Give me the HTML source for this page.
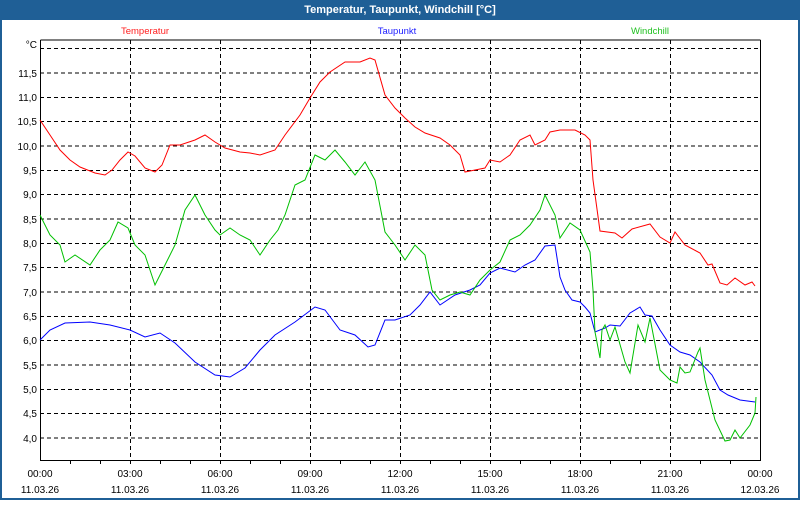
<!DOCTYPE html>
<html><head><meta charset="utf-8"><style>
body{margin:0;width:800px;height:500px;overflow:hidden;background:#fff;font-family:"Liberation Sans",sans-serif}
</style></head><body>
<svg width="800" height="500" xmlns="http://www.w3.org/2000/svg" font-family="Liberation Sans, sans-serif" font-size="10">
<rect x="0" y="0" width="800" height="500" fill="#1f5f96"/>
<rect x="2" y="20" width="796" height="478" fill="#fff"/>
<text x="400" y="13" fill="#fff" font-weight="bold" font-size="11" text-anchor="middle">Temperatur, Taupunkt, Windchill [°C]</text>
<text x="145" y="34" fill="#ff2020" text-anchor="middle" font-size="9.5">Temperatur</text>
<text x="397" y="34" fill="#2020ff" text-anchor="middle" font-size="9.5">Taupunkt</text>
<text x="650" y="34" fill="#20c020" text-anchor="middle" font-size="9.5">Windchill</text>
<g stroke="#000" stroke-dasharray="4,3" stroke-width="1">
<path d="M40 48.5H760M40 73H760M40 97.5H760M40 121.5H760M40 146H760M40 170.5H760M40 194.5H760M40 219H760M40 243.5H760M40 267.5H760M40 292H760M40 316.5H760M40 340.5H760M40 365H760M40 389.5H760M40 413.5H760M40 438H760"/>
<path d="M130.5 40V460M220.5 40V460M310.5 40V460M400.5 40V460M490.5 40V460M580.5 40V460M670.5 40V460"/>
</g>
<path d="M40.5 40V460.5H760.5V40" fill="none" stroke="#000"/>
<path d="M40.5 40H760.5" stroke="#000"/>
<g stroke="#000"><path d="M70.5 460v4M100.5 460v4M130.5 460v4M160.5 460v4M190.5 460v4M220.5 460v4M250.5 460v4M280.5 460v4M310.5 460v4M340.5 460v4M370.5 460v4M400.5 460v4M430.5 460v4M460.5 460v4M490.5 460v4M520.5 460v4M550.5 460v4M580.5 460v4M610.5 460v4M640.5 460v4M670.5 460v4M700.5 460v4M730.5 460v4"/></g>
<g text-anchor="end" fill="#000">
<text x="37" y="48">°C</text>
<text x="37" y="77">11,5</text><text x="37" y="101">11,0</text><text x="37" y="125">10,5</text><text x="37" y="150">10,0</text>
<text x="37" y="174">9,5</text><text x="37" y="198">9,0</text><text x="37" y="223">8,5</text><text x="37" y="247">8,0</text>
<text x="37" y="271">7,5</text><text x="37" y="296">7,0</text><text x="37" y="320">6,5</text><text x="37" y="344">6,0</text>
<text x="37" y="369">5,5</text><text x="37" y="393">5,0</text><text x="37" y="417">4,5</text><text x="37" y="442">4,0</text>
</g>
<g text-anchor="middle" fill="#000">
<text x="40" y="477">00:00</text><text x="40" y="493">11.03.26</text>
<text x="130" y="477">03:00</text><text x="130" y="493">11.03.26</text>
<text x="220" y="477">06:00</text><text x="220" y="493">11.03.26</text>
<text x="310" y="477">09:00</text><text x="310" y="493">11.03.26</text>
<text x="400" y="477">12:00</text><text x="400" y="493">11.03.26</text>
<text x="490" y="477">15:00</text><text x="490" y="493">11.03.26</text>
<text x="580" y="477">18:00</text><text x="580" y="493">11.03.26</text>
<text x="670" y="477">21:00</text><text x="670" y="493">11.03.26</text>
<text x="760" y="477">00:00</text><text x="760" y="493">12.03.26</text>
</g>
<g fill="none" stroke-width="1">
<polyline stroke="#ff0000" points="40,120 50,135 60,150 70,160 80,167 95,173 105,175 112,170 120,160 128,152 135,156 145,168 155,172 162,165 170,145 180,145 195,140 205,135 215,142 225,148 240,152 250,153 260,155 275,150 285,135 300,115 310,98 320,82 330,72 345,62 360,62 370,58 375,60 385,95 395,108 405,118 415,127 425,133 440,138 450,145 460,155 465,172 475,170 485,168 490,160 500,162 510,155 520,140 530,135 535,145 545,140 550,132 560,130 575,130 585,135 590,140 593,180 600,231 615,233 622,238 632,229 650,224 660,237 670,243 675,232 685,245 700,253 708,265 712,264 720,283 727,285 735,278 745,285 752,282 755,286"/>
<polyline stroke="#0000ff" points="40,340 50,330 65,323 90,322 110,325 130,330 145,337 160,333 175,343 195,362 215,375 230,377 245,368 260,350 275,335 295,322 315,307 325,310 340,330 355,335 368,347 375,345 385,320 395,320 410,315 420,305 430,292 440,305 455,295 470,290 480,285 490,273 500,268 515,272 525,265 535,260 545,246 555,245 560,277 565,290 572,300 580,302 585,307 590,313 595,332 605,328 610,325 620,326 630,313 640,307 645,315 652,316 660,330 670,345 680,352 690,355 700,362 712,375 720,390 728,395 740,400 755,402"/>
<polyline stroke="#00c000" points="40,215 50,235 60,245 65,262 75,255 90,265 100,250 110,240 118,222 128,228 135,245 145,255 155,285 165,265 175,245 185,210 195,195 205,215 215,230 220,235 230,228 240,235 250,240 260,255 270,240 278,230 285,215 295,185 305,180 315,155 325,160 335,150 345,162 355,175 365,162 375,180 385,232 395,245 405,260 415,245 425,255 432,290 440,300 450,295 460,292 470,295 480,280 490,270 500,262 510,240 520,235 530,225 540,210 545,195 555,215 560,238 570,223 580,230 590,252 593,290 595,332 600,358 602,330 605,325 610,340 615,327 625,362 630,373 638,325 645,342 650,318 660,370 670,380 677,383 680,367 685,373 690,372 698,352 700,348 705,380 715,420 725,441 730,440 735,430 740,438 750,425 755,413 756,397"/>
</g>
</svg>
</body></html>
